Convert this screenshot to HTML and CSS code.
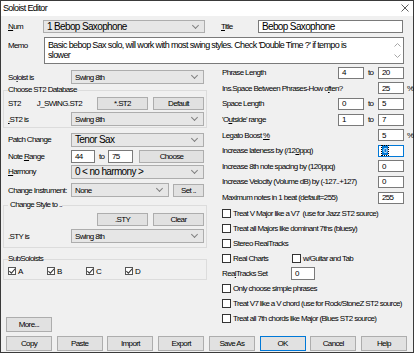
FILE: index.html
```html
<!DOCTYPE html>
<html>
	<head>
		<meta charset="utf-8">
		<title>Soloist Editor</title>
		<link rel="stylesheet" href="styles.css">
	</head>
	<body>
		<div class="win">
			<div class="cap">
				<span>Soloist Editor</span>
				<svg class="close" width="8" height="8" viewBox="0 0 8 8"><path d="M0.5 0.5L7.5 7.5M7.5 0.5L0.5 7.5" stroke="#333" stroke-width="0.8"/></svg>
			</div>
			<div class="dlg">
				<div class="top">
					<span class="lbl l-num"><u>N</u>um</span>
					<div class="combo big c-num">1 Bebop Saxophone</div>
					<span class="lbl l-title"><u>T</u>itle</span>
					<div class="edit big e-title">Bebop Saxophone</div>
				</div>
				<div class="memo-row">
					<span class="lbl l-memo">Memo</span>
					<div class="memo">
						<div class="memo-text">Basic bebop Sax solo, will work with most swing styles. Check 'Double Time ?' if tempo is<br>slower</div>
						<div class="vscroll">
							<svg width="7" height="4" viewBox="0 0 7 4"><path d="M0.5 3.5L3.5 0.5L6.5 3.5" fill="none" stroke="#a6a6a6"/></svg>
							<svg width="7" height="4" viewBox="0 0 7 4"><path d="M0.5 0.5L3.5 3.5L6.5 0.5" fill="none" stroke="#a6a6a6"/></svg>
						</div>
					</div>
				</div>

				<div class="cols">
					<div class="left">
						<div class="row r-sol">
							<span class="lbl lw">So<u>l</u>oist is</span>
							<div class="combo fill">Swing 8th</div>
						</div>
						<fieldset class="grp g-st2">
							<legend>Choose ST2 Database</legend>
							<div class="row r-btns">
								<span>ST2</span>
								<span class="st2name">J_SWING.ST2</span>
								<button class="btn b51">*.ST2</button>
								<button class="btn b51">Default</button>
							</div>
							<div class="row r-in">
								<span class="lbl lw"><u>.</u>ST2 is</span>
								<div class="combo fill">Swing 8th</div>
							</div>
						</fieldset>
						<div class="row r-patch">
							<span class="lbl lw">Patch Change</span>
							<div class="combo fill mid">Tenor Sax</div>
						</div>
						<div class="row r-note">
							<span class="lbl lw">Note <u>R</u>ange</span>
							<div class="edit e-44">44</div>
							<span class="to-l">to</span>
							<div class="edit e-75">75</div>
							<button class="btn b-choose">Choose</button>
						</div>
						<div class="row r-harm">
							<span class="lbl lw"><u>H</u>armony</span>
							<div class="combo fill mid">0 &lt; no harmony &gt;</div>
						</div>
						<div class="row r-inst">
							<span class="lbl lw">Change Instrument:</span>
							<div class="combo fill">None</div>
							<button class="btn b-set">Set ..</button>
						</div>
						<fieldset class="grp g-sty">
							<legend>Change Style to ..</legend>
							<div class="row r-btns">
								<button class="btn b51">.STY</button>
								<button class="btn b51">Clear</button>
							</div>
							<div class="row r-in">
								<span class="lbl lw">.STY is</span>
								<div class="combo fill">Swing 8th</div>
							</div>
						</fieldset>
						<fieldset class="grp g-sub">
							<legend>SubSoloists</legend>
							<div class="row r-subs">
								<span class="sub"><i class="ck on"></i>A</span>
								<span class="sub"><i class="ck on"></i>B</span>
								<span class="sub"><i class="ck on"></i>C</span>
								<span class="sub"><i class="ck on"></i>D</span>
							</div>
						</fieldset>
						<div class="more-row">
							<button class="btn b-bar">More...</button>
						</div>
					</div>

					<div class="right">
						<div class="prow">
							<span class="plbl">Phrase Length</span>
							<div class="edit n">4</div><span class="to">to</span><div class="edit n">20</div><span class="unit"></span>
						</div>
						<div class="prow">
							<span class="plbl">Ins.Space Between Phrases-How o<u>f</u>ten?</span>
							<div class="edit n">25</div><span class="unit">%</span>
						</div>
						<div class="prow">
							<span class="plbl">Space Length</span>
							<div class="edit n">0</div><span class="to">to</span><div class="edit n">5</div><span class="unit"></span>
						</div>
						<div class="prow">
							<span class="plbl">'O<u>u</u>tside' range</span>
							<div class="edit n">1</div><span class="to">to</span><div class="edit n">7</div><span class="unit"></span>
						</div>
						<div class="prow">
							<span class="plbl">Legato Boost <u>%</u></span>
							<div class="edit n">5</div><span class="unit">%</span>
						</div>
						<div class="prow">
							<span class="plbl">Increase lateness by (/12<u>0</u>ppq)</span>
							<div class="edit n focus"><span class="sel">0</span></div><span class="unit"></span>
						</div>
						<div class="prow">
							<span class="plbl">Increase 8th note spacing by (120ppq)</span>
							<div class="edit n">0</div><span class="unit"></span>
						</div>
						<div class="prow">
							<span class="plbl">Increase Velocity (Volume dB) by (-127..+127)</span>
							<div class="edit n">0</div><span class="unit"></span>
						</div>
						<div class="prow">
							<span class="plbl">Maximum notes in 1 beat (default=255)</span>
							<div class="edit n">255</div><span class="unit"></span>
						</div>

						<div class="checks">
							<div class="crow"><i class="ck"></i>Treat V Major like a V7&nbsp; (use for Jazz ST2 source)</div>
							<div class="crow"><i class="ck"></i>Treat all Majors like dominant 7ths (bluesy)</div>
							<div class="crow"><i class="ck"></i>Stereo RealTracks</div>
							<div class="crow">
								<span class="half"><i class="ck"></i>Real Charts</span>
								<span><i class="ck"></i>w/Guitar and Tab</span>
							</div>
							<div class="crow">
								<span class="rt-lbl">Rea<u>l</u>Tracks Set</span>
								<div class="edit e-rt">0</div>
							</div>
							<div class="crow"><i class="ck"></i>Only choose simple phrases</div>
							<div class="crow"><i class="ck"></i>Treat V7 like a V chord (use for Rock/StoneZ ST2 source)</div>
							<div class="crow"><i class="ck"></i>Treat all 7th chords like Major (Blues ST2 source)</div>
						</div>
					</div>
				</div>

				<div class="btnbar">
					<button class="btn b-bar">Copy</button>
					<button class="btn b-bar">Paste</button>
					<button class="btn b-bar">Import</button>
					<button class="btn b-bar">Export</button>
					<button class="btn b-bar">Save As</button>
					<button class="btn b-bar ok">OK</button>
					<button class="btn b-bar">Cancel</button>
					<button class="btn b-bar">Help</button>
				</div>
			</div>
		</div>
	</body>
</html>
```

FILE: styles.css
```css
*{margin: 0; padding: 0; box-sizing: border-box;}
body{background: #fff; font-family: "Liberation Sans", Arial, sans-serif; font-size: 8px; letter-spacing: -0.08em; color: #000;}
u{text-decoration: underline;}

.win{width: 414px; height: 353px; border: 1px solid #3a3a3a; background: #f0f0f0; display: flex; flex-direction: column;}
.cap{height: 15px; flex: none; background: #fff; display: flex; align-items: center; padding: 0 4px 2px 2px; font-size: 9px;}
.cap .close{margin-left: auto;}
.dlg{flex: 1; display: flex; flex-direction: column; padding: 4px 3px 1px 2px;}

/* controls */
.lbl{white-space: nowrap;}
.combo{height: 14px; background: #e6e6e6; border: 1px solid #adadad; display: flex; align-items: center; padding-left: 3px; white-space: nowrap; overflow: hidden;}
.combo::after{content: ""; margin-left: auto; margin-right: 6px; margin-top: -3px; width: 4px; height: 4px; border-right: 1px solid #808080; border-bottom: 1px solid #808080; transform: rotate(45deg); flex: none;}
.edit{height: 13px; background: #fff; border: 1px solid #7a7a7a; display: flex; align-items: center; padding-left: 3px; white-space: nowrap; flex: none;}
.btn{height: 13px; background: #e1e1e1; border: 1px solid #adadad; font: inherit; letter-spacing: inherit; color: #000; display: flex; align-items: center; justify-content: center; flex: none;}
.big{font-size: 10px;}
.mid{font-size: 10px;}
.ck{display: inline-block; width: 9px; height: 9px; border: 1px solid #333; background: #fff; flex: none; margin-right: 2px;}
.ck.on{background: #fff url("data:image/svg+xml,%3Csvg xmlns='http://www.w3.org/2000/svg' width='7' height='7' viewBox='0 0 7 7'%3E%3Cpath d='M0.8 3.4L2.7 5.3L6.3 1.2' fill='none' stroke='%23333' stroke-width='1'/%3E%3C/svg%3E") center/7px 7px no-repeat;}

/* top */
.top{height: 13px; display: flex; align-items: center; padding-left: 5px;}
.l-num{width: 35px;}
.c-num{width: 162px; height: 13px;}
.l-title{width: 37px; margin-left: 16px;}
.e-title{width: 145px;}
.memo-row{height: 27px; margin-top: 4px; display: flex; padding-left: 5px;}
.l-memo{width: 36px; padding-top: 4px;}
.memo{width: 360px; background: #fff; border: 1px solid #7a7a7a; display: flex;}
.memo-text{flex: 1; font-size: 9px; line-height: 10px; padding: 2px 0 0 3px; white-space: nowrap; overflow: hidden;}
.vscroll{width: 12px; display: flex; flex-direction: column; align-items: center; justify-content: space-between; padding: 5px 0 5px;}

/* columns */
.cols{flex: 1; margin-top: 1px; display: flex;}
.left{width: 204px; display: flex; flex-direction: column; padding-top: 4px;}
.right{width: 196px; margin-left: 7px; display: flex; flex-direction: column;}

.row{display: flex; align-items: center;}
.left > .row{padding: 0 3px 0 5px;}
.lw{width: 63px; flex: none;}
.fill{flex: 1;}
.r-sol{height: 16px;}
.grp{border: 1px solid #dcdcdc; padding: 1px 2px 1px 4px; margin: 0;}
.grp legend{padding: 0; line-height: 10px;}
.r-btns{height: 14px; justify-content: flex-end; gap: 5px;}
.st2name{margin-left: 11px; margin-right: auto;}
.b51{width: 51px;}
.r-in{height: 14px; margin-top: 2px;}
.g-st2{margin-bottom: 4px;}
.r-patch{height: 15px;}
.r-note{height: 14px; margin-top: 2px;}
.e-44{width: 24px;}
.to-l{width: 13px; padding-left: 4px;}
.e-75{width: 25px;}
.b-choose{width: 65px; margin-left: auto;}
.r-harm{height: 15px; margin-top: 1px;}
.r-inst{height: 14px; margin-top: 4px;}
.b-set{width: 31px; margin-left: 4px;}
.g-sty{margin-top: 3px; padding-top: 2px; padding-bottom: 4px;}
.g-sty legend{padding-left: 2px;}
.g-sty .r-in{margin-top: 3px;}
.g-sub{margin-top: 6px; padding-top: 0; padding-bottom: 1px;}
.r-subs{height: 14px;}
.sub{width: 39px; display: flex; align-items: center;}
.sub .ck{width: 8px; height: 8px; border-color: #555;}
.more-row{margin-top: auto; padding-left: 3px;}

/* right column */
.prow{height: 15.6px; display: flex; align-items: center; padding-left: 8px;}
.plbl{flex: 1; white-space: nowrap;}
.n{width: 26px; height: 12px;}
.to{width: 14px; padding-left: 4px;}
.unit{width: 6px; padding-left: 3px; flex: none;}
.focus{border-color: #0078d7;}
.sel{background: #0078d7; color: #fff; outline: 1px dotted #000; padding: 0 1px;}
.checks{margin-top: 1px;}
.crow{height: 14.9px; display: flex; align-items: center; padding-left: 8px; white-space: nowrap;}
.crow span{display: flex; align-items: center;}
.half{width: 70px;}
.rt-lbl{width: 69px;}
.e-rt{width: 24px;}

/* bottom buttons */
.btnbar{height: 15px; margin-top: 4px; display: flex; justify-content: space-between; padding: 0 3px;}
.b-bar{width: 46px; height: 15px;}
.ok{border-color: #0078d7;}
```
